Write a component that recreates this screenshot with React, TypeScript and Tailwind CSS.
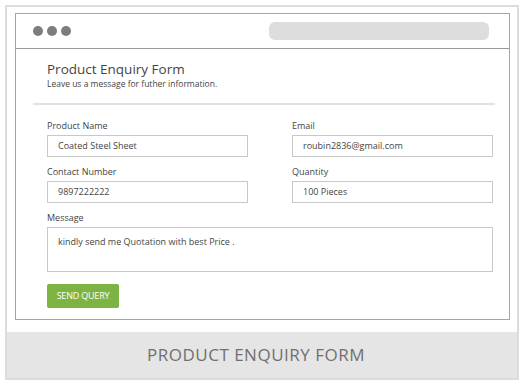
import React from 'react';

const font = { fontFamily: '"Open Sans", "Noto Sans", sans-serif' };

const Field = ({ label, value }: { label: string; value: string }) => (
  <div className="flex flex-col">
    <label className="h-[12px] text-[9px] leading-[12px] text-[#444]">{label}</label>
    <div className="mt-[3px] h-[22px] border border-[#c8c8c8] bg-white pl-[10px] flex items-center text-[9px] text-[#444]">
      {value}
    </div>
  </div>
);

export default function App() {
  return (
    <div className="w-[525px] h-[388px] bg-white pt-[5px] pl-[5px]" style={font}>
      <div className="w-[514px] h-[375px] border-2 border-[#dcdcdc] flex flex-col">
        {/* Browser window */}
        <div className="mx-[8px] mt-[6px] mr-[7px] h-[307px] border border-[#a2a6aa] flex flex-col">
          <div className="h-[35px] border-b border-[#9a9a9a] flex items-center justify-between pl-[17px] pr-[20px]">
            <div className="flex gap-[4px]">
              <span className="w-[10px] h-[10px] rounded-full bg-[#7d7d7d]" />
              <span className="w-[10px] h-[10px] rounded-full bg-[#7d7d7d]" />
              <span className="w-[10px] h-[10px] rounded-full bg-[#7d7d7d]" />
            </div>
            <div className="w-[220px] h-[18px] rounded-[6px] bg-[#dddddd]" />
          </div>

          <div className="pl-[17px] pr-[14px]">
            <div className="pl-[14px] pt-[12px] h-[54px]">
              <h1 className="text-[13.5px] leading-[16px] text-[#444]">Product Enquiry Form</h1>
              <p className="mt-[1px] text-[8.5px] leading-[11px] text-[#444]">Leave us a message for futher information.</p>
            </div>
            <div className="h-[2px] bg-[#e2e2e2]" />

            <div className="pl-[14px] pt-[15px]">
              <div className="grid grid-cols-[201px_201px] gap-x-[44px] gap-y-[9px]">
                <Field label="Product Name" value="Coated Steel Sheet" />
                <Field label="Email" value="roubin2836@gmail.com" />
                <Field label="Contact Number" value="9897222222" />
                <Field label="Quantity" value="100 Pieces" />
              </div>
              <div className="mt-[9px] flex flex-col">
                <label className="h-[12px] text-[9px] leading-[12px] text-[#444]">Message</label>
                <div className="mt-[3px] w-[446px] h-[45px] border border-[#c8c8c8] pl-[10px] pt-[7px] text-[9px] text-[#444]">
                  kindly send me Quotation with best Price .
                </div>
              </div>
              <button className="mt-[12px] w-[72px] h-[24px] rounded-[2px] bg-[#7cb342] text-white text-[9px] tracking-[-0.2px]">
                SEND QUERY
              </button>
            </div>
          </div>
        </div>

        <div className="mt-[12px] h-[46px] bg-[#e5e5e5] flex items-center justify-center pr-[12px] text-[17px] tracking-[0.5px] text-[#707070]">
          PRODUCT ENQUIRY FORM
        </div>
      </div>
    </div>
  );
}
